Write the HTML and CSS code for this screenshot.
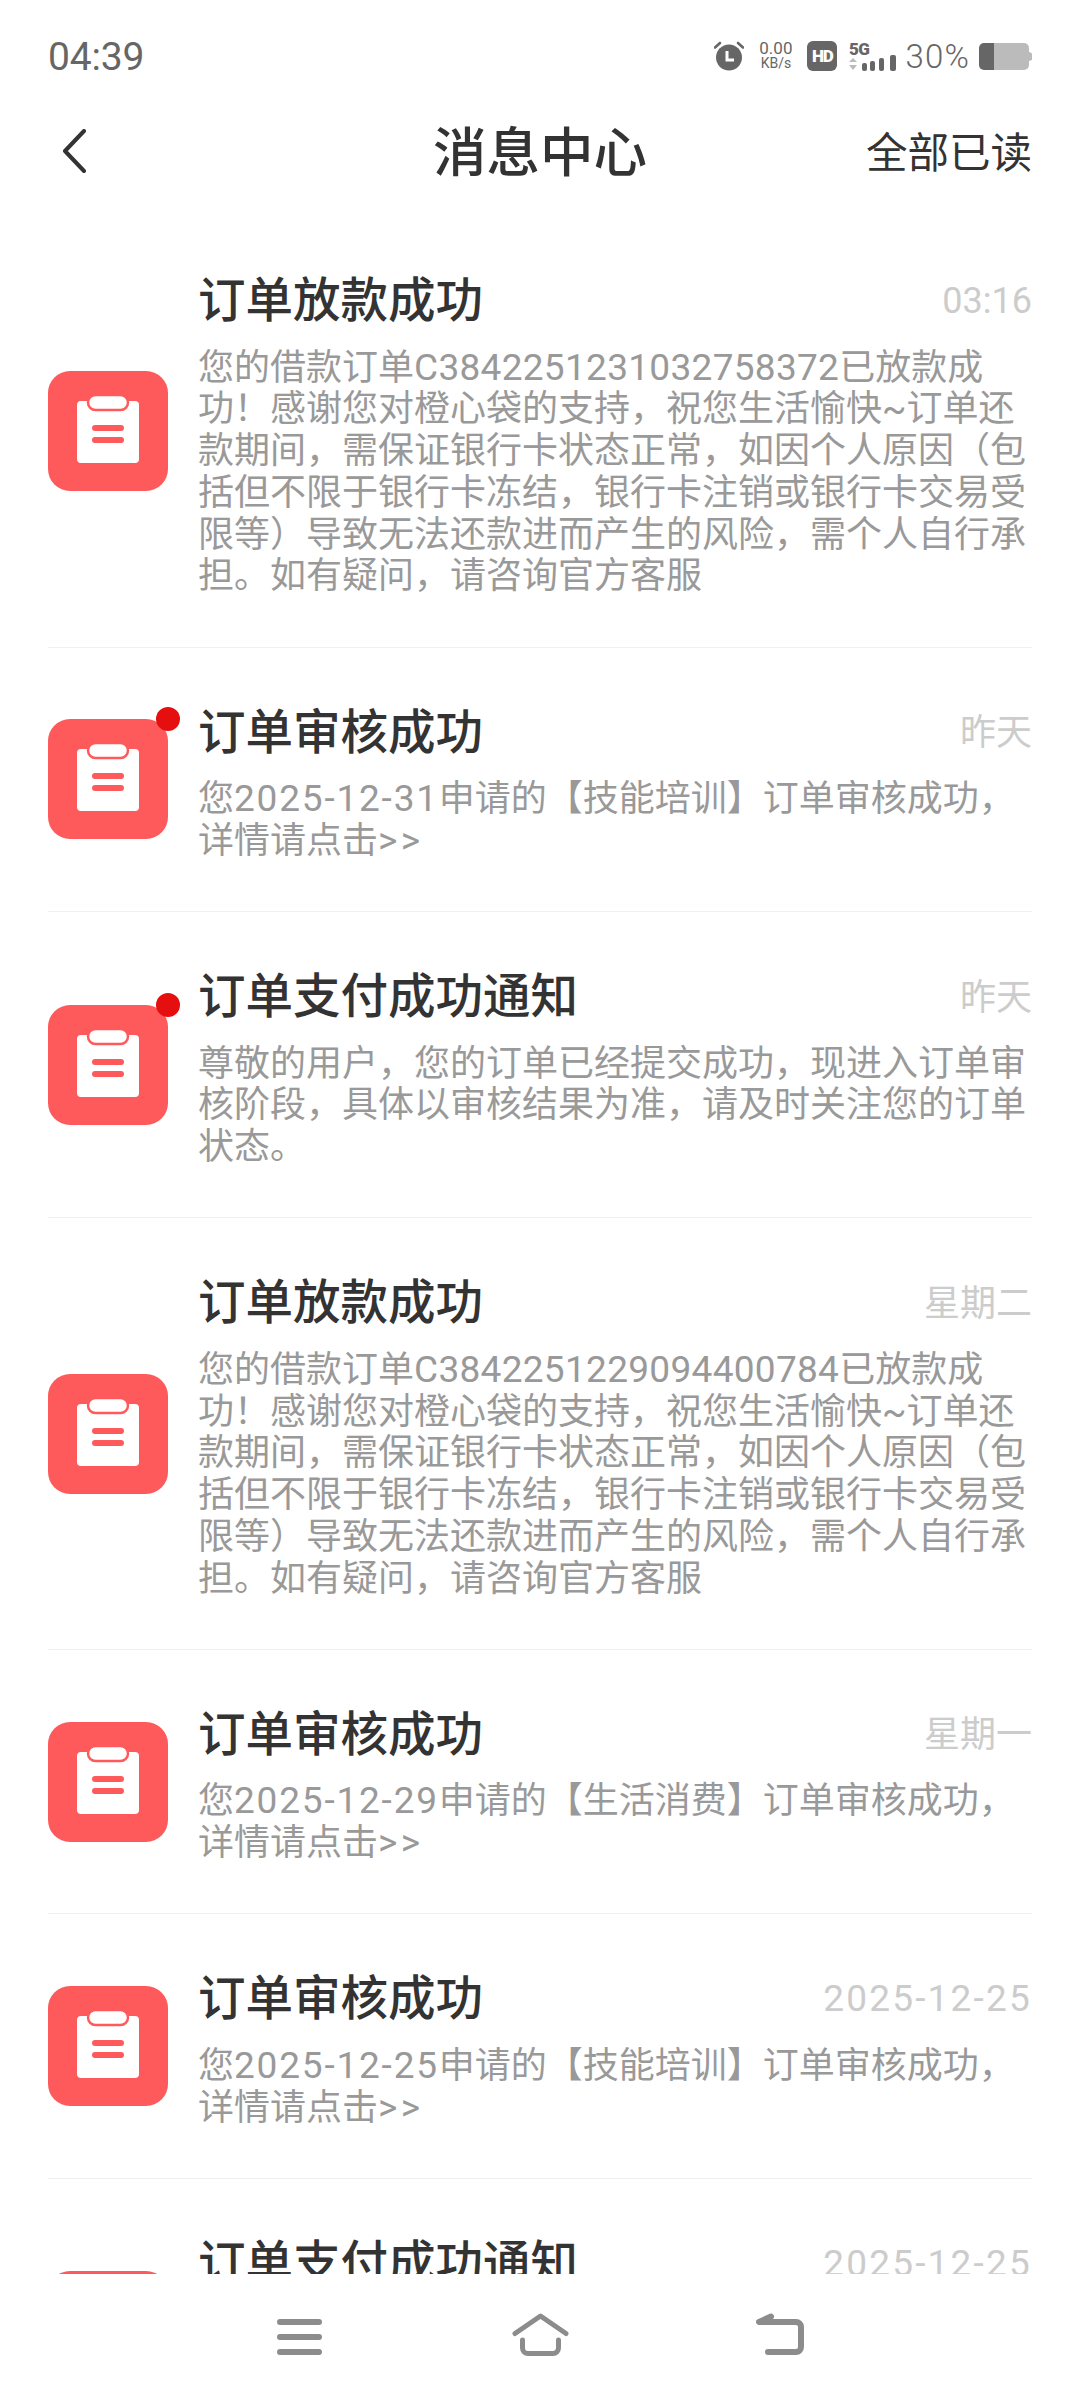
FILE: index.html
```html
<!DOCTYPE html>
<html lang="zh-CN">
<head>
<meta charset="utf-8">
<title>消息中心</title>
<link rel="stylesheet" href="styles.css">
</head>
<body>
<svg class="defs" width="0" height="0" aria-hidden="true">
  <symbol id="clip" viewBox="0 0 120 120">
    <rect width="120" height="120" rx="22" fill="#fe5a5c"/>
    <rect x="29" y="30" width="62" height="62" rx="4" fill="#fff"/>
    <rect x="40" y="24" width="40" height="15" rx="7.5" fill="#fff" stroke="#fe5a5c" stroke-width="2.5"/>
    <rect x="44" y="54" width="32" height="6" rx="3" fill="#fe5a5c"/>
    <rect x="44" y="66" width="32" height="6" rx="3" fill="#fe5a5c"/>
  </symbol>
</svg>
<div class="app">
  <div class="status">
    <span class="clock">04:39</span>
    <div class="status-right">
      <svg class="alarm" width="30" height="30" viewBox="0 0 30 30">
        <circle cx="15" cy="16.5" r="13" fill="#666"/>
        <path d="M1 6.500 6 2M29 6.500 24 2" stroke="#666" stroke-width="2.600" stroke-linecap="round"/>
        <path d="M13 10v9h7" fill="none" stroke="#fff" stroke-width="3"/>
      </svg>
      <div class="speed"><span>0.00</span><span class="speed-unit">KB/s</span></div>
      <span class="hd">HD</span>
      <svg class="signal" width="48" height="30" viewBox="0 0 48 30">
        <text x="0" y="14" class="sig-text">5G</text>
        <path d="M4 17l4 4H0zM4 29l4-5H0z" fill="#bbb"/>
        <rect x="13" y="22" width="5" height="8" rx="2" fill="#666"/>
        <rect x="21" y="20" width="5" height="10" rx="2" fill="#666"/>
        <rect x="30" y="17" width="5" height="13" rx="2" fill="#666"/>
        <rect x="41" y="14" width="6" height="16" rx="2" fill="#666"/>
      </svg>
      <span class="pct">30%</span>
      <svg class="battery" width="53" height="27" viewBox="0 0 53 27">
        <path d="M15 0H45a5 5 0 0 1 5 5V22a5 5 0 0 1-5 5H15z" fill="#bbb"/>
        <path d="M50 9a3.500 4.500 0 0 1 0 9z" fill="#bbb"/>
        <path d="M15 0H5a5 5 0 0 0-5 5V22a5 5 0 0 0 5 5H15z" fill="#666"/>
      </svg>
    </div>
  </div>

  <header class="nav-bar">
    <svg class="back" width="24" height="44" viewBox="0 0 24 44">
      <path d="M22 2 3 22l19 20" fill="none" stroke="#333" stroke-width="4" stroke-linecap="round" stroke-linejoin="round"/>
    </svg>
    <h1 class="page-title">消息中心</h1>
    <span class="read-all">全部已读</span>
  </header>

  <main class="list">
    <article class="item">
      <svg class="icon"><use href="#clip"/></svg>
      <div class="item-main">
        <div class="item-head"><h2 class="item-title">订单放款成功</h2><time class="item-time">03:16</time></div>
        <p class="item-body">您的借款订单<span class="num">C3842251231032758372</span>已放款成<br>功！感谢您对橙心袋的支持，祝您生活愉快~订单还<br>款期间，需保证银行卡状态正常，如因个人原因（包<br>括但不限于银行卡冻结，银行卡注销或银行卡交易受<br>限等）导致无法还款进而产生的风险，需个人自行承<br>担。如有疑问，请咨询官方客服</p>
      </div>
    </article>
    <article class="item">
      <div class="icon-wrap"><svg class="icon"><use href="#clip"/></svg><span class="dot"></span></div>
      <div class="item-main">
        <div class="item-head"><h2 class="item-title">订单审核成功</h2><time class="item-time word-time">昨天</time></div>
        <p class="item-body">您<span class="num date">2025-12-31</span>申请的【技能培训】订单审核成功，<br>详情请点击<span class="num arrows">&gt;&gt;</span></p>
      </div>
    </article>
    <article class="item">
      <div class="icon-wrap"><svg class="icon"><use href="#clip"/></svg><span class="dot"></span></div>
      <div class="item-main">
        <div class="item-head"><h2 class="item-title">订单支付成功通知</h2><time class="item-time word-time">昨天</time></div>
        <p class="item-body">尊敬的用户，您的订单已经提交成功，现进入订单审<br>核阶段，具体以审核结果为准，请及时关注您的订单<br>状态。</p>
      </div>
    </article>
    <article class="item">
      <svg class="icon"><use href="#clip"/></svg>
      <div class="item-main">
        <div class="item-head"><h2 class="item-title">订单放款成功</h2><time class="item-time word-time">星期二</time></div>
        <p class="item-body">您的借款订单<span class="num">C3842251229094400784</span>已放款成<br>功！感谢您对橙心袋的支持，祝您生活愉快~订单还<br>款期间，需保证银行卡状态正常，如因个人原因（包<br>括但不限于银行卡冻结，银行卡注销或银行卡交易受<br>限等）导致无法还款进而产生的风险，需个人自行承<br>担。如有疑问，请咨询官方客服</p>
      </div>
    </article>
    <article class="item">
      <svg class="icon"><use href="#clip"/></svg>
      <div class="item-main">
        <div class="item-head"><h2 class="item-title">订单审核成功</h2><time class="item-time word-time">星期一</time></div>
        <p class="item-body">您<span class="num date">2025-12-29</span>申请的【生活消费】订单审核成功，<br>详情请点击<span class="num arrows">&gt;&gt;</span></p>
      </div>
    </article>
    <article class="item">
      <svg class="icon"><use href="#clip"/></svg>
      <div class="item-main">
        <div class="item-head"><h2 class="item-title">订单审核成功</h2><time class="item-time full-date">2025-12-25</time></div>
        <p class="item-body">您<span class="num date">2025-12-25</span>申请的【技能培训】订单审核成功，<br>详情请点击<span class="num arrows">&gt;&gt;</span></p>
      </div>
    </article>
    <article class="item">
      <svg class="icon"><use href="#clip"/></svg>
      <div class="item-main">
        <div class="item-head"><h2 class="item-title">订单支付成功通知</h2><time class="item-time full-date">2025-12-25</time></div>
        <p class="item-body">尊敬的用户，您的订单已经提交成功，现进入订单审<br>核阶段，具体以审核结果为准，请及时关注您的订单<br>状态。</p>
      </div>
    </article>
  </main>

  <nav class="sys-nav">
    <svg width="45" height="42" viewBox="0 0 45 42"><path d="M3 9H42M3 24H42M3 39H42" stroke="#8c8c8c" stroke-width="6" stroke-linecap="round"/></svg>
    <svg width="57" height="43" viewBox="0 0 57 43"><path d="M3 20.500 28.500 3 54 20.500" fill="none" stroke="#8c8c8c" stroke-width="5" stroke-linecap="round" stroke-linejoin="round"/><path d="M10.500 27V35a5.500 5.500 0 0 0 5.500 5.500H41a5.500 5.500 0 0 0 5.500-5.500V27" fill="none" stroke="#8c8c8c" stroke-width="5" stroke-linecap="round"/></svg>
    <svg width="48" height="42" viewBox="0 0 48 42"><path d="M15 3.500 3 9H40a5 5 0 0 1 5 5V34a5 5 0 0 1-5 5H12" fill="none" stroke="#8c8c8c" stroke-width="6" stroke-linecap="round" stroke-linejoin="round"/></svg>
  </nav>
</div>
</body>
</html>
```
FILE: styles.css
```css
* { box-sizing: border-box; }
html, body { margin: 0; padding: 0; background: #fff; }
body { font-family: Roboto, "Noto Sans CJK SC", sans-serif; color: #333; }
.defs { position: absolute; }

.app { width: 1080px; height: 2400px; display: flex; flex-direction: column; overflow: hidden; }

.status { height: 112px; padding: 0 48px; display: flex; align-items: center; justify-content: space-between; color: #666; }
.clock { font-size: 39px; font-weight: 400; letter-spacing: -.2px; padding-top: 2px; }
.status-right { display: flex; align-items: center; }
.alarm { margin-right: 13px; }
.speed { width: 37px; margin-right: 13px; display: flex; flex-direction: column; align-items: center; font-size: 17px; line-height: 15px; }
.speed-unit { font-size: 14px; }
.hd { width: 30px; height: 30px; margin-right: 12px; background: #666; color: #fff; border-radius: 6px; font-size: 17px; font-weight: 900; line-height: 30px; text-align: center; letter-spacing: -1px; }
.signal { margin-right: 8px; }
.sig-text { font: 900 17px Roboto, sans-serif; fill: #666; letter-spacing: -.5px; }
.pct { font-size: 33px; font-weight: 300; letter-spacing: 1.200px; margin-right: 9px; }

.nav-bar { height: 78px; padding: 0 48px; display: grid; grid-template-columns: 1fr auto 1fr; align-items: center; }
.back { margin: 0 0 4px 14px; }
.page-title { margin: 0; font-size: 53.500px; font-weight: 500; line-height: 78px; padding-top: 3px; color: #333; }
.read-all { justify-self: end; font-size: 41.500px; color: #333; margin-bottom: 5px; }

.list { flex: 1; min-height: 0; overflow: hidden; padding: 0 48px; margin-top: 26px; }
.item { display: flex; align-items: center; gap: 30px; border-bottom: 1px solid #f0f0f0; }
.item-main { flex: 1; min-width: 0; padding: 54px 0 48.500px; }
.item-head { height: 62px; display: flex; align-items: center; justify-content: space-between; margin-bottom: 15.500px; }
.item-title { margin: 0; font-size: 47.500px; font-weight: 500; line-height: 62px; color: #333; }
.item-time { font-size: 36px; color: #ccc; margin-bottom: 1px; }
.word-time { margin-bottom: 7px; }
.full-date { font-size: 37px; letter-spacing: 2.200px; }
.item-body { margin: 0; font-size: 36px; line-height: 41.750px; color: #999; white-space: nowrap; }
.num { font-size: 37px; line-height: 1; letter-spacing: .3px; }
.num.date { letter-spacing: 1.800px; }
.num.arrows { letter-spacing: 3.500px; }
.icon { display: block; width: 120px; height: 120px; flex: none; }
.icon-wrap { position: relative; flex: none; }
.dot { position: absolute; top: -12px; right: -12px; width: 24px; height: 24px; border-radius: 50%; background: #e60f0f; }

.sys-nav { height: 126px; flex: none; background: #fff; display: flex; align-items: flex-start; padding: 39px 0 0 277px; gap: 190px; }
.sys-nav svg:last-child { margin-left: -3px; }
```
